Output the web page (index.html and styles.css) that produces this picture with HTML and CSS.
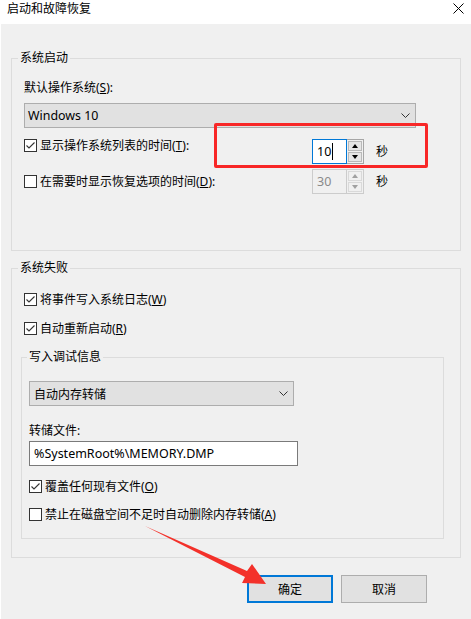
FILE: index.html
```html
<!DOCTYPE html>
<html lang="zh-CN">
<head>
<meta charset="utf-8">
<title>启动和故障恢复</title>
<link rel="stylesheet" href="styles.css">
</head>
<body>
<div class="window">
  <div class="titlebar">
    <span class="title">启动和故障恢复</span>
    <svg class="close" width="11" height="11" viewBox="0 0 11 11"><path d="M0.5 0.5 L10.5 10.5 M10.5 0.5 L0.5 10.5" stroke="#000" stroke-width="1" fill="none"/></svg>
  </div>
  <div class="client">
    <fieldset class="group group-startup">
      <legend>系统启动</legend>
      <div class="label">默认操作系统(<u>S</u>):</div>
      <div class="combo combo-os">
        <span class="latin">Windows 10</span>
        <svg class="chev" width="9" height="5" viewBox="0 0 9 5"><path d="M0.5 0.5 L4.5 4.5 L8.5 0.5" stroke="#333" stroke-width="1" fill="none"/></svg>
      </div>
      <div class="row row-top">
        <div class="opt">
          <span class="check checked"><svg width="13" height="13" viewBox="0 0 13 13"><path d="M2.5 6.5 L5 9 L10.5 3.5" stroke="#333" stroke-width="1.1" fill="none"/></svg></span>
          <span>显示操作系统列表的时间(<u>T</u>):</span>
        </div>
        <div class="spin spin-focus">
          <div class="spin-input">10<span class="caret"></span></div>
          <div class="spin-btns"><span class="sb"><i class="tri-up"></i></span><span class="sb"><i class="tri-down"></i></span></div>
        </div>
        <span class="unit">秒</span>
      </div>
      <div class="row row-mid">
        <div class="opt">
          <span class="check"></span>
          <span>在需要时显示恢复选项的时间(<u>D</u>):</span>
        </div>
        <div class="spin spin-disabled">
          <div class="spin-input">30</div>
          <div class="spin-btns"><span class="sb"><i class="tri-up"></i></span><span class="sb"><i class="tri-down"></i></span></div>
        </div>
        <span class="unit">秒</span>
      </div>
    </fieldset>

    <fieldset class="group group-fail">
      <legend>系统失败</legend>
      <div class="crow first">
        <span class="check checked"><svg width="13" height="13" viewBox="0 0 13 13"><path d="M2.5 6.5 L5 9 L10.5 3.5" stroke="#333" stroke-width="1.1" fill="none"/></svg></span>
        <span>将事件写入系统日志(<u>W</u>)</span>
      </div>
      <div class="crow second">
        <span class="check checked"><svg width="13" height="13" viewBox="0 0 13 13"><path d="M2.5 6.5 L5 9 L10.5 3.5" stroke="#333" stroke-width="1.1" fill="none"/></svg></span>
        <span>自动重新启动(<u>R</u>)</span>
      </div>
      <fieldset class="group group-debug">
        <legend>写入调试信息</legend>
        <div class="combo combo-dump">
          <span>自动内存转储</span>
          <svg class="chev" width="9" height="5" viewBox="0 0 9 5"><path d="M0.5 0.5 L4.5 4.5 L8.5 0.5" stroke="#333" stroke-width="1" fill="none"/></svg>
        </div>
        <div class="label label-file">转储文件:</div>
        <div class="textbox">%SystemRoot%\MEMORY.DMP</div>
        <div class="crow inner">
          <span class="check checked"><svg width="13" height="13" viewBox="0 0 13 13"><path d="M2.5 6.5 L5 9 L10.5 3.5" stroke="#333" stroke-width="1.1" fill="none"/></svg></span>
          <span>覆盖任何现有文件(<u>O</u>)</span>
        </div>
        <div class="crow inner">
          <span class="check"></span>
          <span>禁止在磁盘空间不足时自动删除内存转储(<u>A</u>)</span>
        </div>
      </fieldset>
    </fieldset>

    <div class="buttons">
      <button class="btn btn-default">确定</button>
      <button class="btn">取消</button>
    </div>
  </div>

  <div class="mark-rect"></div>
  <svg class="mark-arrow" width="471" height="619" viewBox="0 0 471 619">
    <polygon points="145,526 247,571 252,564 266,584 242,583 245,577" fill="#f3312a"/>
  </svg>
</div>
</body>
</html>
```

FILE: styles.css
```css
* { box-sizing: border-box; }

html, body {
  margin: 0;
  padding: 0;
}

body {
  width: 471px;
  height: 619px;
  overflow: hidden;
  background: #f0f0f0;
  font-family: "Noto Sans", "Noto Sans CJK SC", sans-serif;
  font-size: 12px;
  color: #000;
}

u { text-decoration: underline; text-underline-offset: 1px; }

.window {
  position: relative;
  width: 471px;
  height: 619px;
  border-left: 1px solid #fff;
  background: #f0f0f0;
}

.titlebar {
  height: 24px;
  background: #fff;
  display: flex;
  justify-content: space-between;
  align-items: flex-start;
  padding-left: 6px;
}

.title {
  line-height: 18px;
  font-size: 12px;
}

.close {
  margin-top: 3px;
  margin-right: 7px;
}

.client {
  padding: 26px 10px 0 10px;
}

.group {
  margin: 0;
  border: 1px solid #dcdcdc;
  min-width: 0;
}

.group > legend {
  line-height: 16px;
  padding: 0 2px;
  margin-left: -6px;
}

.group-startup {
  width: 450px;
  padding: 14px 12px 56px 12px;
}

.group-fail {
  width: 450px;
  margin-top: 9px;
  padding: 16px 12px 18px 12px;
}

.group-debug {
  width: 423px;
  margin-top: 13px;
  margin-left: -3px;
  padding: 16px 7px 16px 7px;
}

.group-debug > legend {
  margin-left: -2px;
}

.label {
  line-height: 16px;
}

.combo {
  height: 25px;
  border: 1px solid #adadad;
  background: #e1e1e1;
  display: flex;
  align-items: center;
  justify-content: space-between;
}

.combo-os {
  width: 392px;
  margin-top: 7px;
  padding: 0 5px 0 3px;
}

.latin { font-size: 12.4px; }

.combo-dump {
  width: 265px;
  padding: 0 5px 0 4px;
}

.chev { display: block; }

.row {
  display: flex;
  height: 25px;
}

.row-top {
  margin-top: 11px;
  align-items: flex-start;
}

.row-mid {
  margin-top: 5px;
  align-items: center;
}

.opt {
  width: 288px;
  display: flex;
  align-items: center;
  gap: 3px;
  height: 13px;
  line-height: 13px;
}

.check {
  width: 13px;
  height: 13px;
  border: 1px solid #333;
  background: #fff;
  flex: none;
  position: relative;
  display: block;
}

.check svg {
  display: block;
  margin: -1px 0 0 -1px;
}

.spin {
  display: flex;
  height: 25px;
  width: 52px;
}

.spin-input {
  width: 35px;
  height: 25px;
  border: 1px solid #0078d7;
  background: #fff;
  padding-left: 4px;
  display: flex;
  align-items: center;
  font-size: 12.5px;
}

.caret {
  display: inline-block;
  width: 1px;
  height: 17px;
  background: #000;
  margin-left: 1px;
}

.spin-btns {
  width: 17px;
  height: 25px;
  border: 1px solid #a6a6a6;
  border-left: none;
  padding: 1px;
  display: flex;
  flex-direction: column;
  gap: 1px;
  background: #f0f0f0;
}

.sb {
  flex: 1;
  border: 1px solid #b9b9b9;
  background: #e6e6e6;
  display: flex;
  align-items: center;
  justify-content: center;
}

.tri-up, .tri-down {
  width: 0;
  height: 0;
  border-left: 3.5px solid transparent;
  border-right: 3.5px solid transparent;
}

.tri-up { border-bottom: 4px solid #000; }
.tri-down { border-top: 4px solid #000; }

.spin-disabled .spin-input {
  border-color: #cccccc;
  background: #f0f0f0;
  color: #8a8a8a;
}

.spin-disabled .spin-btns { border-color: #cccccc; }
.spin-disabled .sb { border-color: #d9d9d9; background: #f0f0f0; }
.spin-disabled .tri-up { border-bottom-color: #a0a0a0; }
.spin-disabled .tri-down { border-top-color: #a0a0a0; }

.unit {
  margin-left: 12px;
  line-height: 16px;
}

.row-top .unit { margin-top: 5px; }

.crow {
  display: flex;
  align-items: center;
  gap: 3px;
  height: 15px;
  line-height: 15px;
}

.crow.second { margin-top: 14px; }
.crow.inner { margin-top: 13px; }

.label-file {
  margin-top: 17px;
}

.textbox {
  width: 269px;
  height: 25px;
  margin-top: 2px;
  border: 1px solid #7a7a7a;
  background: #fff;
  padding-left: 4px;
  display: flex;
  align-items: center;
  font-size: 12.5px;
}

.buttons {
  display: flex;
  justify-content: flex-end;
  gap: 8px;
  margin-top: 17px;
  padding-right: 34px;
}

.btn {
  width: 86px;
  height: 28px;
  border: 1px solid #adadad;
  background: #e1e1e1;
  font-family: inherit;
  font-size: 12px;
  color: #000;
  padding: 0;
  margin: 0;
}

.btn-default {
  border: 2px solid #0078d7;
}

.mark-rect {
  position: absolute;
  left: 213px;
  top: 123px;
  width: 214px;
  height: 45px;
  border: 3px solid #f82727;
  border-radius: 2px;
  pointer-events: none;
}

.mark-arrow {
  position: absolute;
  left: -1px;
  top: 0;
  pointer-events: none;
}
```
